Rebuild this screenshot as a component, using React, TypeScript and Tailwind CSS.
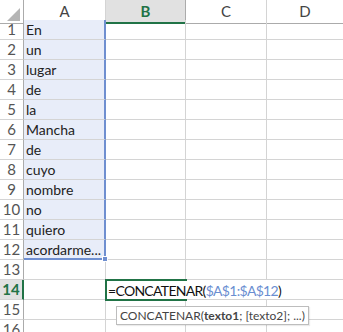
import React from "react";

const words = [
  "En",
  "un",
  "lugar",
  "de",
  "la",
  "Mancha",
  "de",
  "cuyo",
  "nombre",
  "no",
  "quiero",
  "acordarme...",
];

const font = { fontFamily: "Lato, 'Liberation Sans', sans-serif" };

export default function App() {
  const rows = Array.from({ length: 16 }, (_, i) => i + 1);

  return (
    <div
      className="relative w-[343px] h-[332px] overflow-hidden bg-white text-[14px] text-[#222]"
      style={font}
    >
      <div className="grid grid-cols-[24px_82px_80px_81px_1fr] auto-rows-[20px]">
        {/* Header row */}
        <div className="relative h-[24px] border-r border-b border-[#ababab] bg-white">
          <svg
            className="absolute left-0 top-0"
            width="23"
            height="23"
            viewBox="0 0 23 23"
          >
            <polygon points="7,21 20,21 20,8" fill="#b5b5b5" />
          </svg>
        </div>
        <div className="h-[24px] flex items-center justify-center border-r border-b border-[#ababab] border-r-[#d4d4d4] text-[#444] text-[15px]">
          A
        </div>
        <div className="h-[24px] flex items-center justify-center bg-[#e1e1e1] border-r border-r-[#ababab] border-b-2 border-b-[#217346] text-[#217346] font-bold text-[15px]">
          B
        </div>
        <div className="h-[24px] flex items-center justify-center border-r border-b border-[#ababab] border-r-[#d4d4d4] text-[#444] text-[15px]">
          C
        </div>
        <div className="h-[24px] flex items-center justify-center border-b border-[#ababab] text-[#444] text-[15px]">
          D
        </div>

        {rows.map((r) => {
          const active = r === 14;
          const inRange = r <= 12;
          return (
            <React.Fragment key={r}>
              {/* Row header */}
              <div
                className={
                  active
                    ? "flex items-center justify-center bg-[#e1e1e1] border-r-2 border-r-[#217346] border-b border-b-[#d4d4d4] text-[#217346] font-bold text-[15px]"
                    : "flex items-center justify-center border-r border-r-[#ababab] border-b border-b-[#d4d4d4] text-[#555] text-[15px]"
                }
              >
                {r}
              </div>

              {/* Column A */}
              <div
                className={
                  inRange
                    ? r === 12
                      ? "relative flex items-center pl-[2px] bg-[#e8edf9] border-r-2 border-r-[#6f8fd0] border-b-2 border-b-[#6f8fd0] whitespace-nowrap"
                      : "flex items-center pl-[2px] bg-[#e8edf9] border-r-2 border-r-[#6f8fd0] border-b border-b-[#d4d4d4] whitespace-nowrap"
                    : "border-r border-b border-[#d4d4d4]"
                }
              >
                {inRange ? words[r - 1] : null}
                {r === 12 && (
                  <span className="absolute right-[-4px] bottom-[-4px] w-[6px] h-[6px] bg-[#6f8fd0] border border-white" />
                )}
              </div>

              {/* Column B */}
              {active ? (
                <div className="relative z-10 flex items-center pl-px border-2 border-r-0 border-[#217346] -ml-px -mt-px -mr-px h-[22px] whitespace-nowrap overflow-visible text-[14px] tracking-[-0.7px] text-[#111]">
                  <span>
                    =CONCATENAR(
                    <span className="text-[#6a8ed1]">$A$1:$A$12</span>)
                  </span>
                </div>
              ) : (
                <div className="border-r border-b border-[#d4d4d4]" />
              )}

              {/* Column C */}
              <div
                className={
                  active
                    ? "border-b border-[#d4d4d4]"
                    : "border-r border-b border-[#d4d4d4]"
                }
              />

              {/* Column D */}
              <div className="border-b border-[#d4d4d4]" />
            </React.Fragment>
          );
        })}
      </div>

      {/* Function tooltip */}
      <div className="absolute left-[116px] top-[306px] h-[19px] px-[3px] flex items-center bg-white border border-[#bdbdbd] text-[12px] text-[#444] whitespace-nowrap shadow-[1px_1px_1px_rgba(0,0,0,0.08)]">
        CONCATENAR(<span className="font-bold">texto1</span>; [texto2]; ...)
      </div>
    </div>
  );
}
